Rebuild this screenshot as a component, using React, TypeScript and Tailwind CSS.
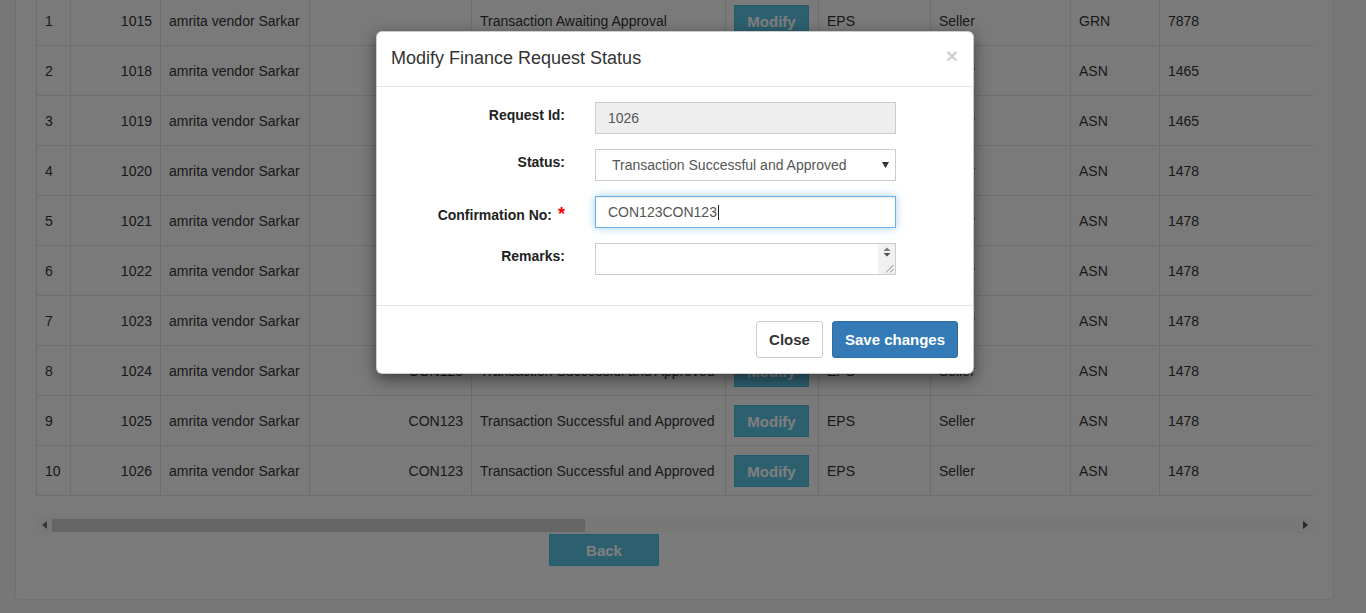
import React from "react";

type Row = {
  n: number;
  id: number;
  conf: string;
  status: string;
  type: string;
  num: string;
};

const rows: Row[] = [
  { n: 1, id: 1015, conf: "", status: "Transaction Awaiting Approval", type: "GRN", num: "7878" },
  { n: 2, id: 1018, conf: "CON123", status: "Transaction Successful and Approved", type: "ASN", num: "1465" },
  { n: 3, id: 1019, conf: "CON123", status: "Transaction Successful and Approved", type: "ASN", num: "1465" },
  { n: 4, id: 1020, conf: "CON123", status: "Transaction Successful and Approved", type: "ASN", num: "1478" },
  { n: 5, id: 1021, conf: "CON123", status: "Transaction Successful and Approved", type: "ASN", num: "1478" },
  { n: 6, id: 1022, conf: "CON123", status: "Transaction Successful and Approved", type: "ASN", num: "1478" },
  { n: 7, id: 1023, conf: "CON123", status: "Transaction Successful and Approved", type: "ASN", num: "1478" },
  { n: 8, id: 1024, conf: "CON123", status: "Transaction Successful and Approved", type: "ASN", num: "1478" },
  { n: 9, id: 1025, conf: "CON123", status: "Transaction Successful and Approved", type: "ASN", num: "1478" },
  { n: 10, id: 1026, conf: "CON123", status: "Transaction Successful and Approved", type: "ASN", num: "1478" },
];

const cell = "h-[50px] border-r border-b border-[#dddddd] px-2 flex items-center whitespace-nowrap overflow-hidden";
const tcell = `${cell} pt-[2px]`;

function TableRow({ r }: { r: Row }) {
  return (
    <div className="grid grid-cols-[34px_90px_149px_162px_254px_93px_112px_140px_89px_300px]">
      <div className={tcell}>{r.n}</div>
      <div className={`${tcell} justify-end`}>{r.id}</div>
      <div className={tcell}>amrita vendor Sarkar</div>
      <div className={`${tcell} justify-end`}>{r.conf}</div>
      <div className={tcell}>{r.status}</div>
      <div className={cell}>
        <div className="h-[32px] w-[75px] pt-[3px] flex items-center justify-center bg-[#5bc0de] border border-[#46b8da] text-white font-bold text-[15px]">
          Modify
        </div>
      </div>
      <div className={tcell}>EPS</div>
      <div className={tcell}>Seller</div>
      <div className={tcell}>{r.type}</div>
      <div className={tcell}>{r.num}</div>
    </div>
  );
}

function FormRow({ label, children, star }: { label: string; children: React.ReactNode; star?: boolean }) {
  return (
    <div className="flex h-[32px] items-center">
      <div
        className={`w-[173px] text-right font-bold text-[14px] text-[#222] leading-[20px] ${
          star ? "pt-[5px]" : "pb-[7px]"
        }`}
      >
        {label}
        {star && <span className="ml-[6px] text-[18px] text-[#ff0000] leading-[20px] align-baseline">*</span>}
      </div>
      <div className="ml-[30px] w-[301px] h-[32px]">{children}</div>
    </div>
  );
}

export default function App() {
  return (
    <div className="relative h-[613px] w-[1366px] overflow-hidden bg-[#eeeeee] font-['Liberation_Sans',Arial,Helvetica,sans-serif] text-[14px] text-[#333333]">
      {/* Page panel (scrolled) */}
      <div className="ml-[15px] mt-[-26px] w-[1319px] border border-[#e3e3e3] bg-[#f5f5f5] rounded-[4px] px-[20px] pt-[20px] pb-[20px]">
        <div className="w-[1277px] overflow-hidden border-t border-l border-[#dddddd]">
          {rows.map((r) => (
            <TableRow key={r.n} r={r} />
          ))}
        </div>
        {/* horizontal scrollbar */}
        <div className="mt-[21px] h-[16px] w-[1277px] bg-[#f1f1f1] flex items-center">
          <div className="w-[16px] h-[16px] flex items-center justify-center">
            <svg width="5" height="8" viewBox="0 0 5 8">
              <path d="M5 0 L0 4 L5 8 Z" fill="#6a6a6a" />
            </svg>
          </div>
          <div className="w-[533px] h-[13px] bg-[#cdcdcd]" />
          <div className="flex-1" />
          <div className="w-[16px] h-[16px] flex items-center justify-center">
            <svg width="5" height="8" viewBox="0 0 5 8">
              <path d="M0 0 L5 4 L0 8 Z" fill="#505050" />
            </svg>
          </div>
        </div>
        <div className="mt-[1px] mb-[13px] ml-[513px] h-[32px] w-[110px] pt-[3px] flex items-center justify-center bg-[#5bc0de] border border-[#46b8da] text-white font-bold text-[15px]">
          Back
        </div>
      </div>

      {/* Backdrop */}
      <div className="absolute inset-0 bg-black/50" />

      {/* Modal */}
      <div className="absolute left-[376px] top-[31px] w-[598px] bg-white border border-black/20 rounded-[6px] shadow-[0_5px_15px_rgba(0,0,0,0.5)]">
        <div className="relative pl-[14px] pr-[15px] pt-[14px] pb-[16px] border-b border-[#e5e5e5]">
          <div className="text-[18px] leading-[24px] text-[#333333]">Modify Finance Request Status</div>
          <div className="absolute right-[15px] top-[12px] text-[21px] font-bold leading-[24px] text-black/20">×</div>
        </div>
        <div className="pt-[15px] px-[15px] pb-[30px] flex flex-col gap-[15px]">
          <FormRow label="Request Id:">
            <div className="h-full w-full border border-[#cccccc] bg-[#eeeeee] pl-[12px] pt-[1px] flex items-center text-[#555555] text-[14px]">
              1026
            </div>
          </FormRow>
          <FormRow label="Status:">
            <div className="relative h-full w-full border border-[#cccccc] bg-white pl-[16px] flex items-center text-[#555555] text-[14px]">
              Transaction Successful and Approved
              <svg className="absolute right-[6px] top-[12px]" width="7" height="6" viewBox="0 0 7 6">
                <path d="M0 0 L7 0 L3.5 6 Z" fill="#333333" />
              </svg>
            </div>
          </FormRow>
          <FormRow label="Confirmation No:" star>
            <div className="h-full w-full border border-[#66afe9] bg-white pl-[12px] flex items-center text-[#555555] text-[14px] shadow-[inset_0_1px_1px_rgba(0,0,0,0.075),0_0_8px_rgba(102,175,233,0.6)]">
              CON123CON123
              <span className="ml-[1px] inline-block w-[1px] h-[15px] bg-[#222]" />
            </div>
          </FormRow>
          <FormRow label="Remarks:">
            <div className="relative h-full w-full border border-[#cccccc] bg-white flex">
              <div className="flex-1" />
              <div className="w-[17px] h-full bg-[#f1f1f1] flex flex-col items-center pt-[3px]">
                <svg width="8" height="10" viewBox="0 0 8 10">
                  <path d="M0.5 4 L4 0.5 L7.5 4 Z" fill="#7a7a7a" />
                  <path d="M0.5 6 L4 9.5 L7.5 6 Z" fill="#505050" />
                </svg>
                <div className="flex-1" />
                <svg className="self-end mr-[1px] mb-[1px]" width="9" height="9" viewBox="0 0 9 9">
                  <path d="M8.5 1 L1 8.5 M8.5 5 L5 8.5" stroke="#888888" strokeWidth="1" />
                </svg>
              </div>
            </div>
          </FormRow>
        </div>
        <div className="border-t border-[#e5e5e5] p-[15px] flex justify-end gap-[9px]">
          <div className="h-[37px] px-[12px] pt-[2px] flex items-center border border-[#cccccc] rounded-[3px] bg-white text-[#333333] font-bold text-[15px]">
            Close
          </div>
          <div className="h-[37px] px-[12px] pt-[2px] flex items-center border border-[#2e6da4] rounded-[3px] bg-[#337ab7] text-white font-bold text-[15px]">
            Save changes
          </div>
        </div>
      </div>
    </div>
  );
}
